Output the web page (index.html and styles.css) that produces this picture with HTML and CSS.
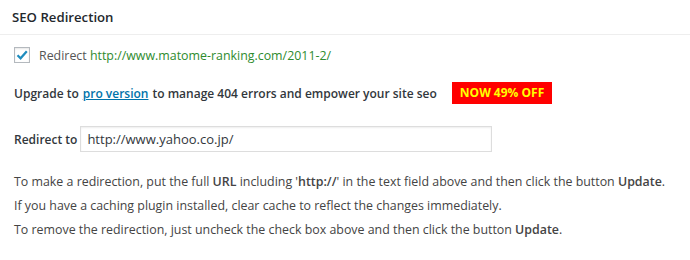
FILE: index.html
```html
<!DOCTYPE html>
<html lang="en">

<head>
    <meta charset="UTF-8">
    <title>SEO Redirection</title>
    <link rel="stylesheet" href="styles.css">
</head>

<body>
    <div class="postbox">
        <h2 class="hndle">SEO Redirection</h2>

        <div class="inside">
            <p class="check-row">
                <span class="checkbox checked">
                    <svg width="12" height="12" viewBox="0 0 12 12">
                        <path d="M1.5 6.2 L4.6 9.3 L10.8 2.2" fill="none" stroke="#1e8cbe" stroke-width="2.2" />
                    </svg>
                </span>
                <label class="check-label">Redirect <span class="url">http://www.matome-ranking.com/2011-2/</span></label>
            </p>

            <p class="upgrade">
                Upgrade to <a href="#">pro version</a> to manage 404 errors and empower your site seo
                <span class="badge">NOW 49% OFF</span>
            </p>

            <div class="redirect-row">
                <label for="redirectTo">Redirect to</label>
                <input type="text" id="redirectTo" value="http://www.yahoo.co.jp/">
            </div>

            <div class="help">
                <p>To make a redirection, put the full <b>URL</b> including '<b>http://</b>' in the text field above and then click the button <b>Update</b>.</p>
                <p>If you have a caching plugin installed, clear cache to reflect the changes immediately.</p>
                <p>To remove the redirection, just uncheck the check box above and then click the button <b>Update</b>.</p>
            </div>
        </div>
    </div>
</body>

</html>
```

FILE: styles.css
```css
body {
    margin: 0;
    background: #fff;
    color: #444;
    font-family: "Open Sans", "Noto Sans", sans-serif;
    font-size: 12.4px;
}

.postbox {
    background: #fff;
}

.hndle {
    margin: 0;
    padding: 8px 12px 8px;
    height: 18px;
    line-height: 18px;
    font-size: 13.2px;
    font-weight: 600;
    color: #23282d;
    border-bottom: 1px solid #eee;
}

.inside {
    padding: 0 14px;
}

.inside p {
    margin: 0;
}

.check-row {
    display: flex;
    align-items: center;
    padding-top: 12px;
    height: 16px;
}

.checkbox {
    width: 14px;
    height: 14px;
    border: 1px solid #b4b9be;
    box-shadow: inset 0 1px 2px rgba(0, 0, 0, .1);
    display: flex;
    align-items: center;
    justify-content: center;
    margin-right: 9px;
}

.check-label {
    color: #555;
}

.url {
    color: #2e8b2e;
}

.upgrade {
    margin-top: 19px !important;
    display: flex;
    align-items: center;
    font-size: 12px;
    font-weight: 600;
    color: #32373c;
    height: 22px;
    white-space: nowrap;
}

.upgrade a {
    color: #0073aa;
    margin: 0 4px;
}

.badge {
    background: #f00;
    color: #ff0;
    font-weight: 700;
    padding: 0 8px;
    height: 22px;
    line-height: 22px;
    margin-left: 15px;
}

.redirect-row {
    display: flex;
    align-items: center;
    margin-top: 22px;
    font-size: 12px;
}

.redirect-row label {
    font-weight: 600;
    color: #32373c;
    margin-right: 3px;
}

.redirect-row input {
    width: 412px;
    height: 26px;
    box-sizing: border-box;
    border: 1px solid #ddd;
    box-shadow: inset 0 1px 2px rgba(0, 0, 0, .07);
    padding: 0 6px;
    font-family: inherit;
    font-size: 13px;
    color: #32373c;
}

.help {
    margin-top: 18px;
}

.help p {
    line-height: 24px;
}

.help b {
    font-weight: 600;
}
```
